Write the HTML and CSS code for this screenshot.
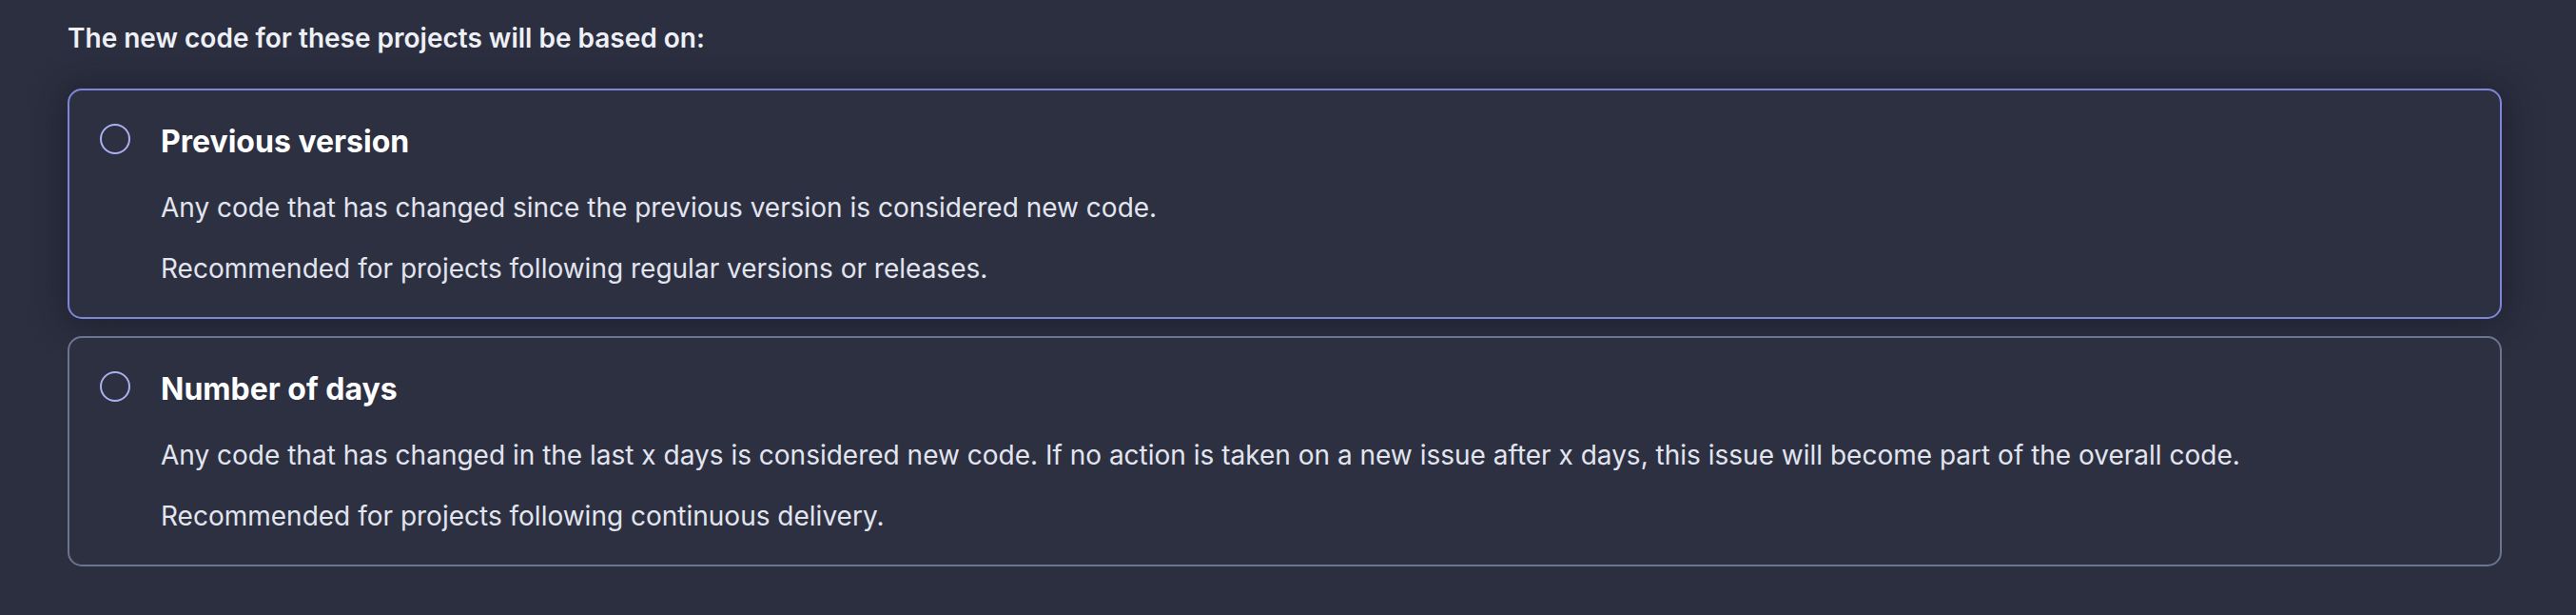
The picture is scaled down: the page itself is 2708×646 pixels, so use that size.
FILE: index.html
```html
<!DOCTYPE html>
<html lang="en">
<head>
<meta charset="utf-8">
<title>New code definition</title>
<link rel="stylesheet" href="styles.css">
</head>
<body>
<main class="page">
  <h2 class="heading">The new code for these projects will be based on:</h2>
  <div class="options">
    <label class="card card--focus">
      <span class="radio"></span>
      <span class="card-body">
        <span class="card-title">Previous version</span>
        <span class="card-text">Any code that has changed since the previous version is considered new code.</span>
        <span class="card-text">Recommended for projects following regular versions or releases.</span>
      </span>
    </label>
    <label class="card">
      <span class="radio"></span>
      <span class="card-body">
        <span class="card-title">Number of days</span>
        <span class="card-text">Any code that has changed in the last x days is considered new code. If no action is taken on a new issue after x days, this issue will become part of the overall code.</span>
        <span class="card-text">Recommended for projects following continuous delivery.</span>
      </span>
    </label>
  </div>
</main>
</body>
</html>
```

FILE: styles.css
```css
html, body {
  margin: 0;
  padding: 0;
  background: #2c2f40;
}

body {
  font-family: Inter, "Noto Sans", sans-serif;
  color: #e3e6f0;
}

.page {
  padding: 20px 78px 0 71px;
}

.heading {
  margin: 0;
  font-size: 28px;
  line-height: 40px;
  font-weight: 600;
  color: #eef0f6;
}

.options {
  margin-top: 33px;
  display: flex;
  flex-direction: column;
  gap: 18px;
}

.card {
  display: flex;
  align-items: flex-start;
  gap: 32px;
  padding: 32px 32px 31px 32px;
  border: 2px solid #6b7491;
  border-radius: 15px;
  background: #2d3041;
}

.card--focus {
  border-color: #7d86d8;
  box-shadow: 0 2px 36px 6px rgba(18, 19, 28, 0.45);
}

.radio {
  flex: none;
  width: 32px;
  height: 32px;
  margin-top: 3px;
  box-sizing: border-box;
  border: 2px solid #a9b1f0;
  border-radius: 50%;
}

.card-body {
  display: flex;
  flex-direction: column;
}

.card-title {
  font-size: 32px;
  line-height: 44px;
  font-weight: 700;
  color: #ffffff;
  margin-bottom: 27px;
}

.card-text {
  font-size: 28px;
  line-height: 40px;
  font-weight: 400;
  color: #e2e5ef;
}

.card-text + .card-text {
  margin-top: 24px;
}
```
